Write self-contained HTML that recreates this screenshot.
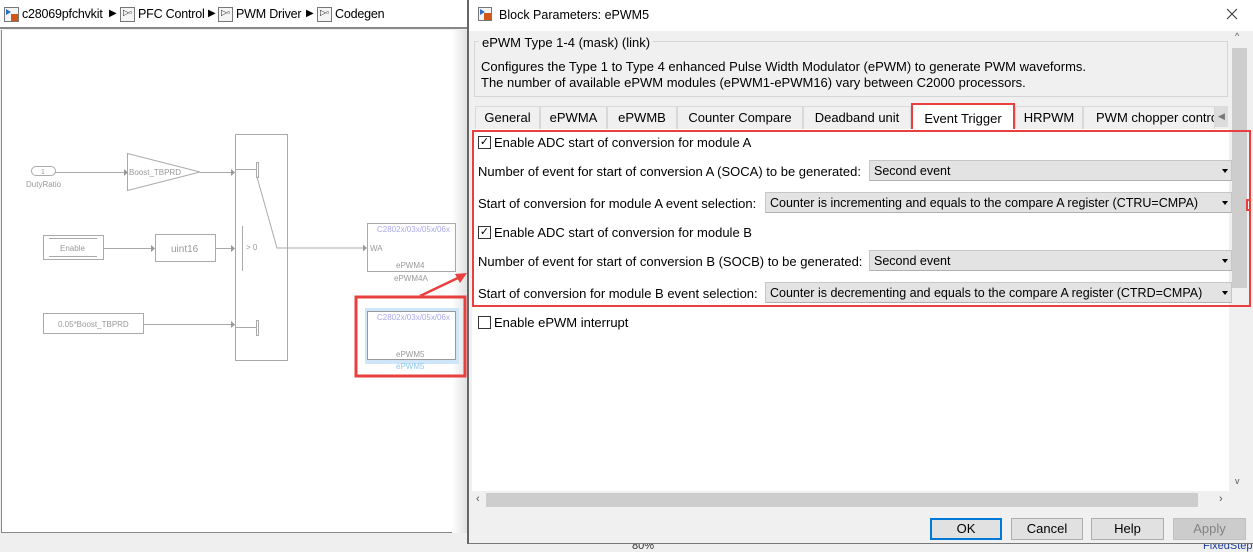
<!DOCTYPE html>
<html><head><meta charset="utf-8"><style>
*{margin:0;padding:0;box-sizing:border-box}
body{width:1253px;height:551px;overflow:hidden;background:#efefef;font-family:"Liberation Sans",sans-serif;position:relative;color:#000}
.a{position:absolute;white-space:nowrap}
.t{font-size:13px}
.ic{position:absolute;width:15px;height:15px;border:1px solid #777;background:#f4f4f4}
.dd{position:absolute;background:#e3e3e3;border:1px solid #c6c6c6;border-bottom:1px solid #b0b0b0;height:21px;font-size:12.5px;padding:3px 4px;line-height:14px;overflow:hidden;white-space:nowrap}
.dd:after{content:"";position:absolute;right:3px;top:8px;border-left:3px solid transparent;border-right:3px solid transparent;border-top:4px solid #000}
.tab{position:absolute;top:106px;height:23px;border:1px solid #d9d9d9;border-bottom:none;background:#f0f0f0;font-size:13px;text-align:center;line-height:22px;white-space:nowrap}
.cb{position:absolute;width:13px;height:13px;border:1px solid #333;background:#fff;font-size:11px;line-height:11px;text-align:center}
.btn{position:absolute;top:518px;height:22px;background:#e1e1e1;border:1px solid #adadad;font-size:13px;text-align:center;line-height:20px}
.bc{position:absolute;top:7px;font-size:12.5px;letter-spacing:-0.2px}
</style></head><body>
<!-- breadcrumb -->
<div class="a" style="left:0;top:0;width:469px;height:29px;background:#fff;border-bottom:2px solid #888"></div>
<div class="ic" style="left:4px;top:7px"><div style="position:absolute;left:6px;top:6px;width:7px;height:7px;background:#d0561a"></div><div style="position:absolute;left:1px;top:1px;width:0;height:0;border-top:3px solid transparent;border-bottom:3px solid transparent;border-left:5px solid #2b6fc2"></div></div>
<div class="a bc" style="left:22px">c28069pfchvkit</div>
<div class="a" style="left:109px;top:8px;font-size:10px">&#9654;</div>
<div class="ic" style="left:120px;top:7px"></div><div class="a" style="left:123px;top:8px;font-size:8px">▷▫</div>
<div class="a bc" style="left:138px">PFC Control</div>
<div class="a" style="left:208px;top:8px;font-size:10px">&#9654;</div>
<div class="ic" style="left:218px;top:7px"></div><div class="a" style="left:221px;top:8px;font-size:8px">▷▫</div>
<div class="a bc" style="left:236px">PWM Driver</div>
<div class="a" style="left:306px;top:8px;font-size:10px">&#9654;</div>
<div class="ic" style="left:317px;top:7px"></div><div class="a" style="left:320px;top:8px;font-size:8px">▷▫</div>
<div class="a bc" style="left:335px">Codegen</div>
<!-- canvas -->
<div class="a" style="left:1px;top:30px;width:468px;height:503px;background:#fff;border-left:1px solid #888;border-bottom:1px solid #888"></div>
<div class="a" style="left:452px;top:30px;width:17px;height:503px;background:linear-gradient(90deg,#fff,#ddd)"></div>
<svg class="a" style="left:0;top:0" width="470" height="551">
<g stroke="#aaa" fill="none" stroke-width="1">
<rect x="31.5" y="166.5" width="24" height="9" rx="4.5"/>
<line x1="55" y1="172.5" x2="124" y2="172.5"/>
<polygon points="127.5,153.5 127.5,190.5 200,172"/>
<line x1="200" y1="172.5" x2="232" y2="172.5"/>
<rect x="235.5" y="134.5" width="52" height="226"/>
<line x1="235" y1="169.5" x2="256" y2="169.5"/>
<rect x="256.5" y="162.5" width="2" height="15"/>
<line x1="242.5" y1="226" x2="242.5" y2="271"/>
<line x1="235" y1="327.5" x2="256" y2="327.5"/>
<rect x="256.5" y="320.5" width="2" height="15"/>
<polyline points="257,177 277,248 364,248"/>
<rect x="43.5" y="235.5" width="60" height="24"/>
<line x1="49" y1="238.5" x2="97" y2="238.5"/><line x1="49" y1="256.5" x2="97" y2="256.5"/>
<line x1="103" y1="248.5" x2="152" y2="248.5"/>
<rect x="155.5" y="234.5" width="60" height="27"/>
<line x1="215" y1="248.5" x2="232" y2="248.5"/>
<rect x="43.5" y="313.5" width="100" height="20"/>
<line x1="143" y1="324.5" x2="232" y2="324.5"/>
<rect x="367.5" y="223.5" width="88" height="48"/>
</g>
<g fill="#999">
<polygon points="124,169 128,172.5 124,176"/><polygon points="231,169 235,172.5 231,176"/>
<polygon points="151,245 155,248.5 151,252"/><polygon points="231,245 235,248.5 231,252"/>
<polygon points="231,321 235,324.5 231,328"/><polygon points="363,244.5 367,248 363,251.5"/>
</g>
<rect x="365" y="308" width="94" height="56" fill="#cfe6f8"/>
<rect x="367.5" y="311.5" width="88" height="48" fill="#fff" stroke="#999"/>
<rect x="356" y="297" width="109" height="79" fill="none" stroke="#e8403f" stroke-width="3"/>
<line x1="420" y1="296" x2="462" y2="276" stroke="#e8403f" stroke-width="2.5"/>
<polygon points="467,273 455,274 460,283" fill="#e8403f"/>
<g font-family="Liberation Sans" font-size="8" fill="#999">
<text x="41" y="174" font-size="7">1</text>
<text x="26" y="187">DutyRatio</text>
<text x="129" y="175">Boost_TBPRD</text>
<text x="60" y="251">Enable</text>
<text x="171" y="252" font-size="10">uint16</text>
<text x="246" y="250">&gt; 0</text>
<text x="58" y="327">0.05*Boost_TBPRD</text>
<text x="370" y="251">WA</text>
<text x="396" y="268">ePWM4</text>
<text x="394" y="281">ePWM4A</text>
<text x="396" y="357">ePWM5</text>
<text x="396" y="369" fill="#8cc8f0">ePWM5</text>
<g fill="#a8a8f0"><text x="377" y="232">C2802x/03x/05x/06x</text><text x="377" y="320">C2802x/03x/05x/06x</text></g>
</g>
</svg>
<!-- status -->
<div class="a" style="left:632px;top:540px;font-size:11px;color:#333">80%</div>
<div class="a" style="left:1203px;top:540px;font-size:11px;color:#1d3b9a">FixedStep</div>
<!-- dialog -->
<div class="a" style="left:467px;top:0;width:786px;height:544px;background:#f0f0f0;border-left:2px solid #666;border-bottom:1px solid #777"></div>
<div class="a" style="left:469px;top:0;width:784px;height:31px;background:#fff"></div>
<div class="ic" style="left:478px;top:7px;width:14px;height:14px"><div style="position:absolute;left:5px;top:5px;width:7px;height:7px;background:#d0561a"></div><div style="position:absolute;left:1px;top:1px;border-top:3px solid transparent;border-bottom:3px solid transparent;border-left:5px solid #2b6fc2"></div></div>
<div class="a" style="left:499px;top:8px;font-size:12.5px">Block Parameters: ePWM5</div>
<svg class="a" style="left:1226px;top:8px" width="12" height="12"><path d="M1 1L11 11M11 1L1 11" stroke="#333" stroke-width="1"/></svg>
<!-- desc -->
<div class="a" style="left:474px;top:41px;width:754px;height:56px;border:1px solid #d5d5d5"></div>
<div class="a t" style="left:479px;top:35px;background:#f0f0f0;padding:0 3px">ePWM Type 1-4 (mask) (link)</div>
<div class="a t" style="left:481px;top:59px">Configures the Type 1 to Type 4 enhanced Pulse Width Modulator (ePWM) to generate PWM waveforms.</div>
<div class="a t" style="left:481px;top:75px">The number of available ePWM modules (ePWM1-ePWM16) vary between C2000 processors.</div>
<!-- vscroll -->
<div class="a" style="left:1229px;top:31px;width:20px;height:460px;background:#f0f0f0"></div>
<div class="a" style="left:1232px;top:48px;width:15px;height:240px;background:#cdcdcd"></div>
<div class="a" style="left:1235px;top:31px;font-size:9px;color:#555">^</div>
<div class="a" style="left:1235px;top:476px;font-size:9px;color:#555">v</div>
<!-- tabs -->
<div class="tab" style="left:475px;width:65px">General</div>
<div class="tab" style="left:540px;width:67px">ePWMA</div>
<div class="tab" style="left:607px;width:70px">ePWMB</div>
<div class="tab" style="left:677px;width:126px">Counter Compare</div>
<div class="tab" style="left:803px;width:108px">Deadband unit</div>
<div class="tab" style="left:911px;width:104px;background:#fff;top:103px;height:26px;border:2px solid #e8403f;border-bottom:none;line-height:28px">Event Trigger</div>
<div class="tab" style="left:1015px;width:68px">HRPWM</div>
<div class="tab" style="left:1083px;width:132px;overflow:hidden;text-align:left;padding-left:12px">PWM chopper control</div>
<div class="a" style="left:1215px;top:106px;width:13px;height:21px;background:#dcdcdc;font-size:9px;color:#777;line-height:21px;text-align:center">◀</div>
<!-- content -->
<div class="a" style="left:472px;top:129px;width:757px;height:362px;background:#fff"></div>
<div class="a" style="left:472px;top:130px;width:779px;height:177px;border:2px solid #e8403f"></div>
<div class="a" style="left:1246px;top:199px;width:5px;height:12px;border:2px solid #e8403f"></div>
<div class="cb" style="left:478px;top:136px">✓</div>
<div class="a t" style="left:494px;top:135px">Enable ADC start of conversion for module A</div>
<div class="a t" style="left:478px;top:164px">Number of event for start of conversion A (SOCA) to be generated:</div>
<div class="dd" style="left:869px;top:160px;width:363px">Second event</div>
<div class="a t" style="left:478px;top:196px">Start of conversion for module A event selection:</div>
<div class="dd" style="left:765px;top:192px;width:467px">Counter is incrementing and equals to the compare A register (CTRU=CMPA)</div>
<div class="cb" style="left:478px;top:226px">✓</div>
<div class="a t" style="left:494px;top:225px">Enable ADC start of conversion for module B</div>
<div class="a t" style="left:478px;top:254px">Number of event for start of conversion B (SOCB) to be generated:</div>
<div class="dd" style="left:869px;top:250px;width:363px">Second event</div>
<div class="a t" style="left:478px;top:286px">Start of conversion for module B event selection:</div>
<div class="dd" style="left:765px;top:282px;width:467px">Counter is decrementing and equals to the compare A register (CTRD=CMPA)</div>
<div class="cb" style="left:478px;top:316px"></div>
<div class="a t" style="left:494px;top:315px">Enable ePWM interrupt</div>
<!-- hscroll -->
<div class="a" style="left:472px;top:492px;width:757px;height:16px;background:#f0f0f0"></div>
<div class="a" style="left:486px;top:493px;width:712px;height:14px;background:#cdcdcd"></div>
<div class="a" style="left:476px;top:493px;font-size:11px;color:#555">‹</div>
<div class="a" style="left:1219px;top:493px;font-size:11px;color:#555">›</div>
<!-- buttons -->
<div class="btn" style="left:930px;width:72px;border:2px solid #0078d7;line-height:18px">OK</div>
<div class="btn" style="left:1011px;width:72px">Cancel</div>
<div class="btn" style="left:1091px;width:73px">Help</div>
<div class="btn" style="left:1173px;width:73px;background:#ccc;border-color:#bfbfbf;color:#838383">Apply</div>
</body></html>
